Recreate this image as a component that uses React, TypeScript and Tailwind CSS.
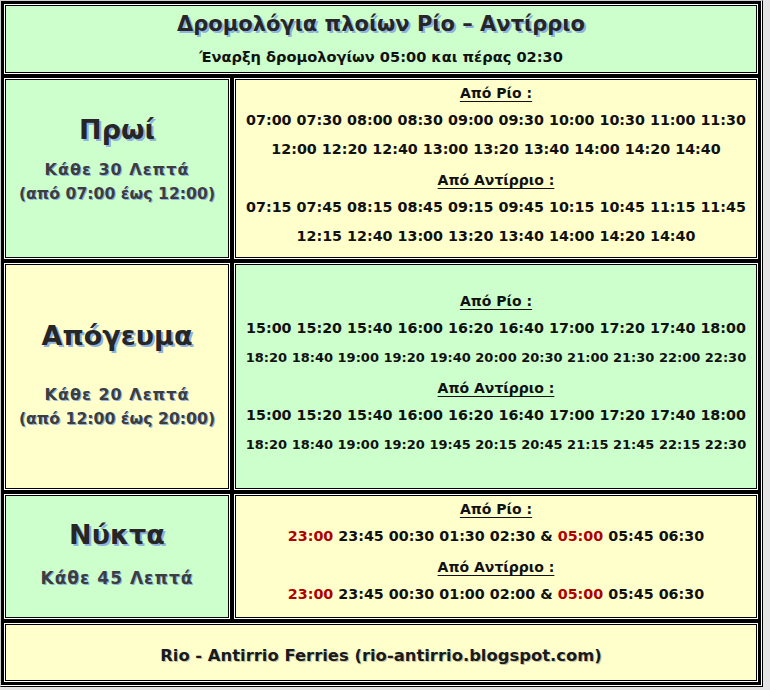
import React from "react";

const green = "bg-[#ccffcc]";
const yellow = "bg-[#ffffcc]";

const morningRio = [
  "07:00 07:30 08:00 08:30 09:00 09:30 10:00 10:30 11:00 11:30",
  "12:00 12:20 12:40 13:00 13:20 13:40 14:00 14:20 14:40",
];
const morningAnt = [
  "07:15 07:45 08:15 08:45 09:15 09:45 10:15 10:45 11:15 11:45",
  "12:15 12:40 13:00 13:20 13:40 14:00 14:20 14:40",
];
const eveningRio = [
  "15:00 15:20 15:40 16:00 16:20 16:40 17:00 17:20 17:40 18:00",
  "18:20 18:40 19:00 19:20 19:40 20:00 20:30 21:00 21:30 22:00 22:30",
];
const eveningAnt = [
  "15:00 15:20 15:40 16:00 16:20 16:40 17:00 17:20 17:40 18:00",
  "18:20 18:40 19:00 19:20 19:45 20:15 20:45 21:15 21:45 22:15 22:30",
];

const Cell = ({ bg, className = "", children }: { bg: string; className?: string; children: React.ReactNode }) => (
  <div className={`${bg} border border-black shadow-[0_0_0_1px_#ffffff] ${className}`}>{children}</div>
);

// underlined "Από ..." heading above a block of times
const Heading = ({ first, children }: { first?: boolean; children: React.ReactNode }) => (
  <div className={`leading-[26px] text-[14px] ${first ? "" : "pt-[3px]"}`}>
    <span className="underline underline-offset-[3px]">{children}</span>
  </div>
);

const Times = ({ small, children }: { small?: boolean; children: React.ReactNode }) => (
  <div className={`leading-[29px] whitespace-nowrap ${small ? "text-[13px]" : "text-[14.3px]"}`}>{children}</div>
);

const Red = ({ children }: { children: React.ReactNode }) => <span className="text-[#b00000]">{children}</span>;

const big = "text-[27px] leading-[32px] text-[#262626] [text-shadow:2px_2px_0_#8fb2de]";
const sub = "leading-[24px] text-[#3d3d3d] [text-shadow:1px_1px_0_#8fb2de]";

export default function App() {
  return (
    <div className="min-h-screen bg-[#e4e4e4] font-['DejaVu_Sans',sans-serif] font-bold text-[#111]">
      <div className="w-[763px] border border-l-[#d0d0d0] border-t-[#d0d0d0] border-r-black border-b-black">
        <div className="bg-black border-r border-b border-white p-[4px] flex flex-col gap-[6px]">
          {/* Title */}
          <Cell bg={green} className="h-[68px] flex flex-col items-center pt-[6px]">
            <div className="text-[21px] leading-[24px] text-[#262626] [text-shadow:2px_2px_0_#8fb2de]">
              Δρομολόγια πλοίων Ρίο – Αντίρριο
            </div>
            <div className="mt-[12px] text-[14.6px] leading-[18px]">Έναρξη δρομολογίων 05:00 και πέρας 02:30</div>
          </Cell>

          {/* Morning */}
          <div className="flex gap-[6px] h-[179px]">
            <Cell bg={green} className="w-[224px] flex flex-col items-center pt-[34px]">
              <div className={big}>Πρωί</div>
              <div className={`${sub} text-[16px] tracking-[1px] mt-[12px]`}>Κάθε 30 Λεπτά</div>
              <div className={`${sub} text-[15.7px]`}>(από 07:00 έως 12:00)</div>
            </Cell>
            <Cell bg={yellow} className="flex-1 flex flex-col items-center">
              <Heading first>Από Ρίο :</Heading>
              {morningRio.map((l) => (
                <Times key={l}>{l}</Times>
              ))}
              <Heading>Από Αντίρριο :</Heading>
              {morningAnt.map((l) => (
                <Times key={l}>{l}</Times>
              ))}
            </Cell>
          </div>

          {/* Afternoon */}
          <div className="flex gap-[6px] h-[225px]">
            <Cell bg={yellow} className="w-[224px] flex flex-col items-center pt-[55px]">
              <div className={`${big} text-[26.5px]`}>Απόγευμα</div>
              <div className={`${sub} text-[16px] tracking-[1px] mt-[31px]`}>Κάθε 20 Λεπτά</div>
              <div className={`${sub} text-[15.7px]`}>(από 12:00 έως 20:00)</div>
            </Cell>
            <Cell bg={green} className="flex-1 flex flex-col items-center pt-[23px]">
              <Heading first>Από Ρίο :</Heading>
              <Times>{eveningRio[0]}</Times>
              <Times small>{eveningRio[1]}</Times>
              <Heading>Από Αντίρριο :</Heading>
              <Times>{eveningAnt[0]}</Times>
              <Times small>{eveningAnt[1]}</Times>
            </Cell>
          </div>

          {/* Night */}
          <div className="flex gap-[6px] h-[123px]">
            <Cell bg={green} className="w-[224px] flex flex-col items-center pt-[23px]">
              <div className={`${big} text-[26.5px]`}>Νύκτα</div>
              <div className={`${sub} text-[17px] tracking-[1px] mt-[15px]`}>Κάθε 45 Λεπτά</div>
            </Cell>
            <Cell bg={yellow} className="flex-1 flex flex-col items-center">
              <Heading first>Από Ρίο :</Heading>
              <Times>
                <Red>23:00</Red> 23:45 00:30 01:30 02:30 &amp; <Red>05:00</Red> 05:45 06:30
              </Times>
              <Heading>Από Αντίρριο :</Heading>
              <Times>
                <Red>23:00</Red> 23:45 00:30 01:00 02:00 &amp; <Red>05:00</Red> 05:45 06:30
              </Times>
            </Cell>
          </div>

          {/* Footer */}
          <Cell bg={yellow} className="h-[57px] flex justify-center pt-[19px]">
            <div className="text-[16.4px] leading-[24px] text-[#1a1a1a] [text-shadow:1px_1px_0_#c4c4a8]">
              Rio - Antirrio Ferries (rio-antirrio.blogspot.com)
            </div>
          </Cell>
        </div>
      </div>
    </div>
  );
}
